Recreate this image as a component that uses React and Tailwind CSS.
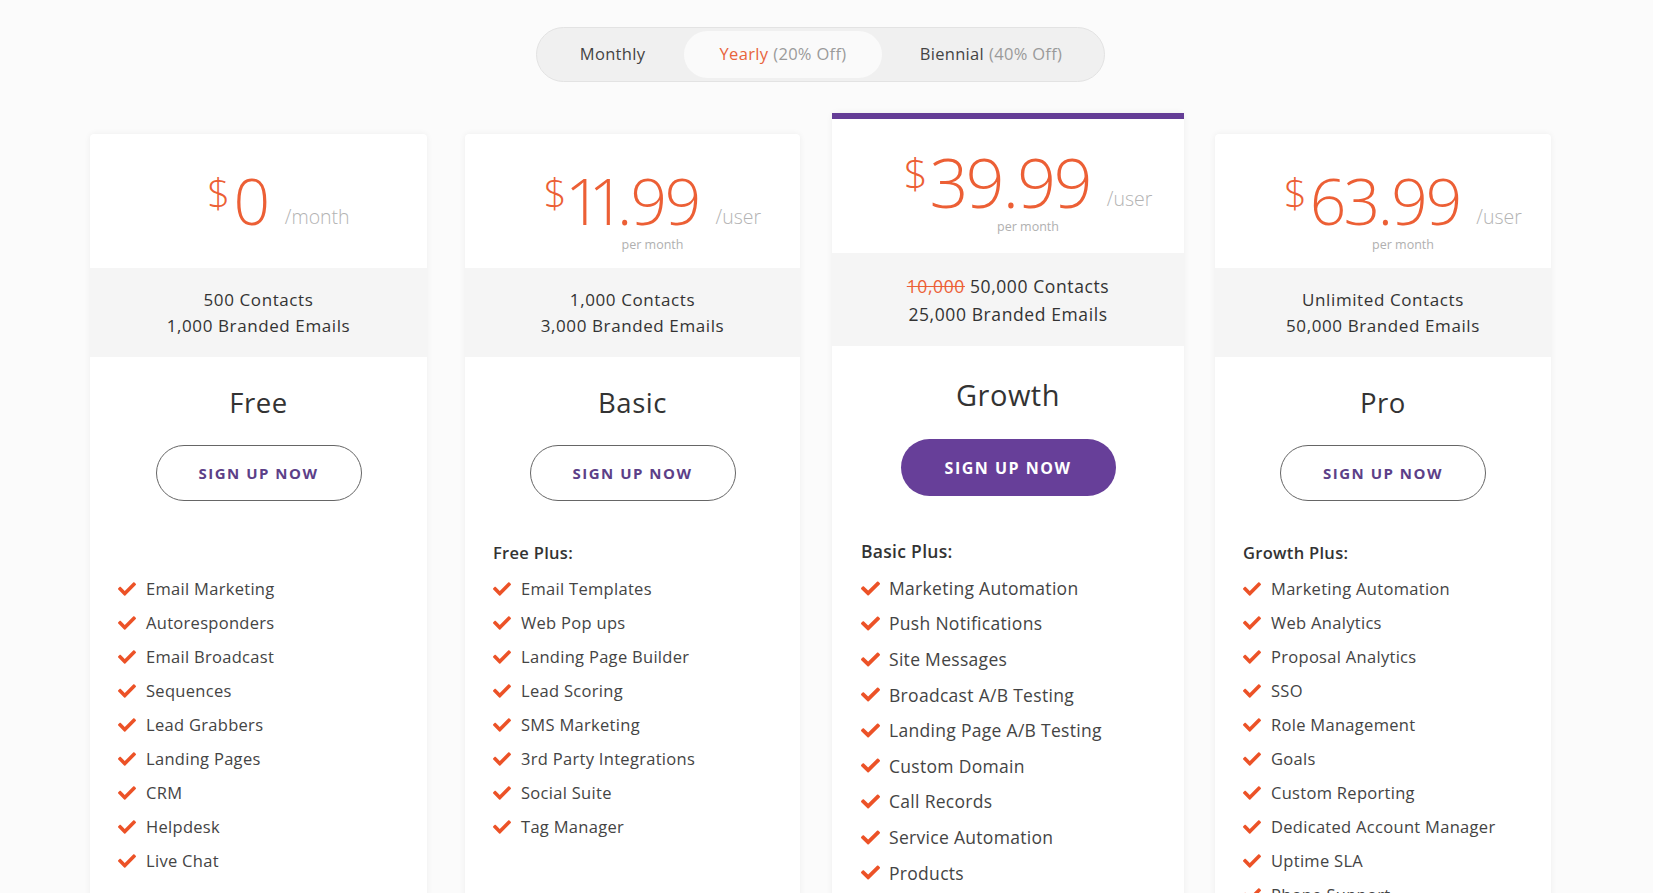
import { FaCheck } from 'react-icons/fa';

const plans = [
  {
    name: 'Free',
    price: '0',
    unit: '/month',
    perMonth: false,
    contacts: [null, '500 Contacts'],
    emails: '1,000 Branded Emails',
    heading: null,
    features: ['Email Marketing', 'Autoresponders', 'Email Broadcast', 'Sequences', 'Lead Grabbers', 'Landing Pages', 'CRM', 'Helpdesk', 'Live Chat']
  },
  {
    name: 'Basic',
    price: '11.99',
    unit: '/user',
    perMonth: true,
    contacts: [null, '1,000 Contacts'],
    emails: '3,000 Branded Emails',
    heading: 'Free Plus:',
    features: ['Email Templates', 'Web Pop ups', 'Landing Page Builder', 'Lead Scoring', 'SMS Marketing', '3rd Party Integrations', 'Social Suite', 'Tag Manager']
  },
  {
    name: 'Growth',
    price: '39.99',
    unit: '/user',
    perMonth: true,
    featured: true,
    contacts: ['10,000', '50,000 Contacts'],
    emails: '25,000 Branded Emails',
    heading: 'Basic Plus:',
    features: ['Marketing Automation', 'Push Notifications', 'Site Messages', 'Broadcast A/B Testing', 'Landing Page A/B Testing', 'Custom Domain', 'Call Records', 'Service Automation', 'Products', 'Reports']
  },
  {
    name: 'Pro',
    price: '63.99',
    unit: '/user',
    perMonth: true,
    contacts: [null, 'Unlimited Contacts'],
    emails: '50,000 Branded Emails',
    heading: 'Growth Plus:',
    features: ['Marketing Automation', 'Web Analytics', 'Proposal Analytics', 'SSO', 'Role Management', 'Goals', 'Custom Reporting', 'Dedicated Account Manager', 'Uptime SLA', 'Phone Support']
  }
];

const PlanCard = ({ plan, className }) => {
  const big = plan.featured;
  return (
    <div className={`bg-white rounded-t-[4px] shadow-[0_0_6px_rgba(0,0,0,0.06)] flex flex-col ${className}`}>
      {big && <div className="h-[6px] bg-[#643d96]"></div>}

      {/* Price */}
      <div className={`flex justify-center pl-[40px] h-[134px] ${big ? 'pt-[29px]' : 'pt-[35px]'}`}>
        <div className="flex flex-col items-center">
          <div className="flex items-start text-[#ec5f35] proportional-nums">
            <span className={`font-light leading-none ${big ? 'text-[42px] mt-[4px]' : 'text-[40px] mt-[4px]'}`}>$</span>
            <span className={`font-light leading-none tracking-[-1.5px] ml-[3px] ${big ? 'text-[68px]' : 'text-[64px]'}`}>{plan.price}</span>
            <span className={`self-end text-[#b3b3b3] font-light ml-[16px] text-[19.5px] leading-none ${big ? 'mb-[8px]' : 'mb-[7px]'}`}>{plan.unit}</span>
          </div>
          {plan.perMonth && (
            <div className={`text-[#b0b0b0] text-[12.5px] leading-none ${big ? 'mt-[5px]' : 'mt-[6px]'}`}>per month</div>
          )}
        </div>
      </div>

      {/* Limits */}
      <div className={`bg-[#f5f5f5] flex flex-col items-center justify-center text-[#333] tracking-[0.6px] ${big ? 'h-[93px] text-[17.5px] leading-[28px]' : 'h-[89px] text-[17px] leading-[26px]'}`}>
        <div>
          {plan.contacts[0] && <span className="text-[#ec5f35] line-through mr-[5px]">{plan.contacts[0]}</span>}
          {plan.contacts[1]}
        </div>
        <div>{plan.emails}</div>
      </div>

      {/* Body */}
      <div className="flex flex-col items-center">
        <div className={`text-[#333] tracking-[0.5px] ${big ? 'mt-[31px] text-[29px]' : 'mt-[28px] text-[27.5px]'} leading-[36px]`}>{plan.name}</div>
        <button
          className={`rounded-full font-bold tracking-[1.5px] ${
            big
              ? 'mt-[26px] w-[215px] h-[57px] bg-[#673f99] text-white text-[16px]'
              : 'mt-[24px] w-[206px] h-[56px] border border-[#666] text-[#5c4088] text-[15px]'
          }`}
        >
          SIGN UP NOW
        </button>
      </div>

      <div className={`flex flex-col ${big ? 'px-[29px] mt-[42px]' : 'px-[28px] mt-[40px]'}`}>
        <div className={`font-semibold text-[#333] h-[24px] tracking-[0.3px] ${big ? 'text-[17.5px]' : 'text-[16.5px]'}`}>
          {plan.heading}
        </div>
        <ul className={`flex flex-col ${big ? 'mt-[14px] gap-[11.6px]' : 'mt-[12px] gap-[10px]'}`}>
          {plan.features.map((f) => (
            <li key={f} className={`flex items-center text-[#444] h-[24px] tracking-[0.3px] ${big ? 'text-[17.5px]' : 'text-[16.5px]'}`}>
              <FaCheck className={`text-[#ec5227] shrink-0 ${big ? 'w-[19px] h-[19px] mr-[9px]' : 'w-[18px] h-[18px] mr-[10px]'}`} />
              {f}
            </li>
          ))}
        </ul>
      </div>
    </div>
  );
};

const App = () => {
  return (
    <div className="h-[893px] overflow-hidden bg-[#fbfbfb]" style={{ fontFamily: '"Open Sans", "Liberation Sans", sans-serif' }}>
      {/* Billing toggle */}
      <div className="pt-[27px] pl-[536px]">
        <div className="w-[569px] h-[55px] rounded-full bg-[#f0f0f0] border border-[#e3e3e3] flex items-center px-[4px] text-[16.5px] tracking-[0.3px]">
          <div className="w-[143px] text-center text-[#444]">Monthly</div>
          <div className="w-[198px] h-[47px] rounded-full bg-[#fafafa] flex items-center justify-center">
            <span className="text-[#e8643c]">Yearly</span>
            <span className="text-[#9a9a9a] ml-[5px]">(20% Off)</span>
          </div>
          <div className="flex-1 text-center">
            <span className="text-[#444]">Biennial</span>
            <span className="text-[#9a9a9a] ml-[5px]">(40% Off)</span>
          </div>
        </div>
      </div>

      {/* Plans */}
      <div className="flex items-start pl-[90px] mt-[31px]">
        <PlanCard plan={plans[0]} className="w-[337px] mt-[21px] min-h-[900px]" />
        <PlanCard plan={plans[1]} className="w-[335px] ml-[38px] mt-[21px] min-h-[900px]" />
        <PlanCard plan={plans[2]} className="w-[352px] ml-[32px] min-h-[900px]" />
        <PlanCard plan={plans[3]} className="w-[336px] ml-[31px] mt-[21px] min-h-[900px]" />
      </div>
    </div>
  );
};

export default App;
